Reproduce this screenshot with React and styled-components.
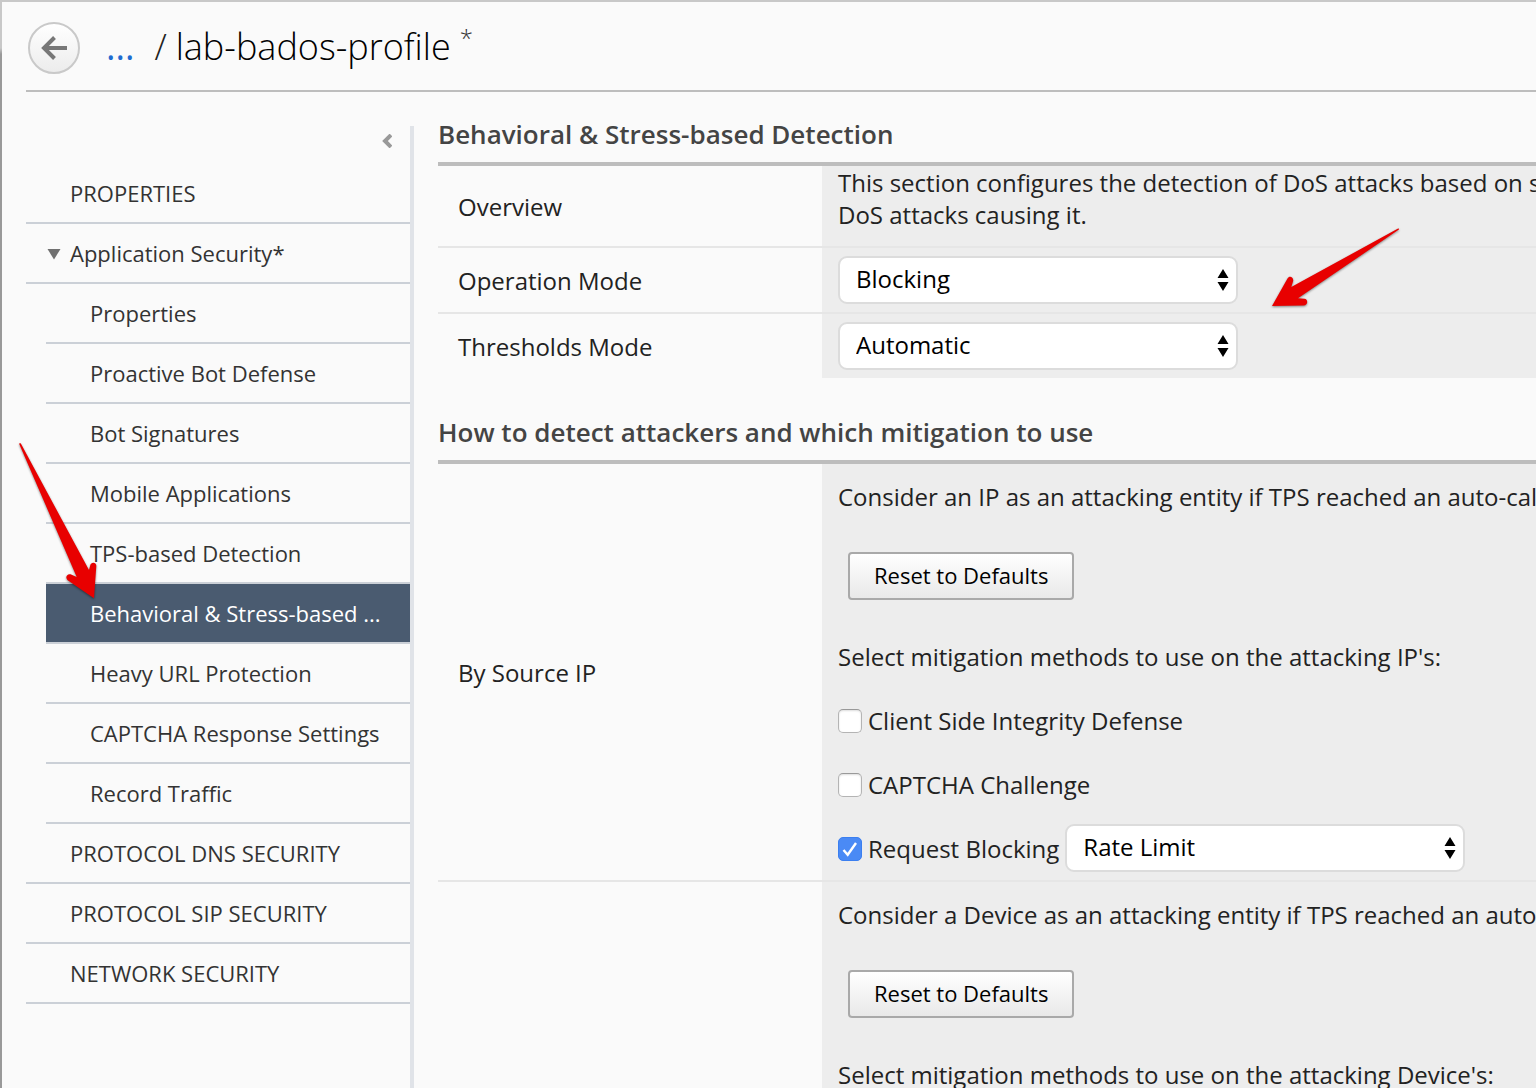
import React from "react";
import styled, { createGlobalStyle } from "styled-components";

const GlobalStyle = createGlobalStyle`
  *, *::before, *::after { box-sizing: border-box; }
  body {
    margin: 0;
    background: #fafafa;
    color: #222;
    font-family: "Open Sans", "Noto Sans", sans-serif;
    font-size: 24px;
    line-height: 32px;
  }
  button, select, input { font: inherit; margin: 0; }
  a { color: inherit; text-decoration: none; }
`;

const Page = styled.div`
  position: relative;
  display: flex;
  flex-direction: column;
  height: 100vh;
  overflow: hidden;
  padding-left: 24px;
  border: 0 solid #999;
  border-width: 2px 0 0 2px;
  border-image: linear-gradient(#c8c8c8 48px, #999 54px) 2;
`;

const Header = styled.header`
  display: flex;
  align-items: flex-start;
  flex: none;
  height: 90px;
  padding-top: 20px;
  border-bottom: 2px solid #bdbdbd;
  font-size: 36px;
  line-height: 50px;
`;

const BackButton = styled.button`
  display: grid;
  place-items: center;
  width: 52px;
  height: 52px;
  margin: 0 26px 0 2px;
  padding: 0;
  border: 2px solid #c9c9c9;
  border-radius: 50%;
  background: linear-gradient(#fff, #ececec);
`;

const Parent = styled.a`
  margin-right: 20px;
  color: #1f6bd0;
`;

const Title = styled.h1`
  display: flex;
  gap: 9px;
  margin: 0;
  color: #000;
  font-size: 36px;
  font-weight: 300;
`;

const Slash = styled.span`
  color: #222;
`;

const Modified = styled.sup`
  color: #333;
  font-size: 24px;
  line-height: 32px;
`;

const Body = styled.div`
  display: flex;
  flex: 1;
  gap: 24px;
  min-height: 0;
  padding-top: 26px;
`;

const Sidebar = styled.nav`
  flex: none;
  width: 388px;
  margin-top: 8px;
  border-right: 4px solid #e0e3e8;
  font-size: 22px;
`;

const CollapseRow = styled.div`
  display: flex;
  justify-content: flex-end;
  align-items: center;
  height: 38px;
  padding: 0 18px 8px 0;
`;

const Collapse = styled.button`
  display: flex;
  padding: 0;
  border: 0;
  background: none;
`;

const NavList = styled.ul`
  margin: 0;
  padding: 0 0 0 ${(p) => (p.$nested ? 20 : 0)}px;
  list-style: none;
`;

const NavLink = styled.a`
  display: flex;
  align-items: center;
  gap: 8px;
  height: 60px;
  padding-left: ${(p) => (p.$arrow ? 20 : 44)}px;
  border-bottom: 2px solid #cbd0d7;
  background: ${(p) => (p.$active ? "#4a5b70" : "transparent")};
  color: ${(p) => (p.$active ? "#fff" : "#333")};
  white-space: nowrap;
`;

const Content = styled.main`
  flex: 1;
  min-width: 0;
  overflow: hidden;
`;

const Section = styled.section`
  margin-bottom: 38px;
`;

const SectionTitle = styled.h2`
  margin: 0;
  padding-bottom: 12px;
  border-bottom: 4px solid #bdbdbd;
  color: #444;
  font-size: 26px;
  font-weight: 600;
`;

const Settings = styled.table`
  width: 100%;
  border-collapse: separate;
  border-spacing: 0;
  table-layout: fixed;
`;

const Row = styled.tr`
  & > * { border-bottom: ${(p) => (p.$last ? 0 : 2)}px solid #e6e6e6; }
`;

const Label = styled.th`
  width: 384px;
  padding: 2px 20px 0;
  font-weight: 400;
  text-align: left;
`;

const Value = styled.td`
  padding: 0 16px;
  background: #ededed;
  white-space: nowrap;
`;

const Overview = styled.p`
  margin: 0;
  padding: 1px 0 15px;
`;

const Line = styled.div`
  display: flex;
  align-items: center;
  gap: 6px;
  height: 64px;
`;

const TextLine = styled.p`
  margin: 0;
  padding: 17px 0 15px;
`;

const ButtonLine = styled.div`
  padding: 24px 10px;
`;

const ResetButton = styled.button`
  display: block;
  height: 48px;
  padding: 0 24px 2px;
  border: 2px solid #a9a9a9;
  border-radius: 4px;
  background: linear-gradient(#fff, #e9e9e9);
  color: #000;
  font-size: 22px;
`;

const CheckLabel = styled.label`
  display: flex;
  align-items: center;
  gap: 6px;
  padding-top: 2px;
`;

const CheckBox = styled.span`
  position: relative;
  display: flex;
  svg {
    position: absolute;
    inset: 0;
    pointer-events: none;
    visibility: hidden;
  }
  input:checked + svg { visibility: visible; }
`;

const CheckInput = styled.input`
  appearance: none;
  width: 24px;
  height: 24px;
  border: 1px solid #b4b4b4;
  border-top-color: #999;
  border-radius: 5px;
  background: #fff;
  box-shadow: inset 0 1px 2px #ddd;
  &:checked {
    border-color: #3b7ff0;
    background: #4a8af5;
    box-shadow: none;
  }
`;

const SelectBox = styled.span`
  position: relative;
  display: block;
  svg {
    position: absolute;
    top: 12px;
    right: 9px;
    pointer-events: none;
  }
`;

const SelectInput = styled.select`
  appearance: none;
  display: block;
  width: 400px;
  height: 48px;
  padding: 0 16px 2px;
  border: 2px solid #dcdcdc;
  border-radius: 9px;
  background: #fff;
  color: #000;
`;

const Pointer = styled.svg`
  position: absolute;
  left: ${(p) => p.$x}px;
  top: ${(p) => p.$y}px;
  pointer-events: none;
  filter: drop-shadow(0 1px 1px rgba(0, 0, 0, 0.45));
`;

const securityPages = [
  "Properties",
  "Proactive Bot Defense",
  "Bot Signatures",
  "Mobile Applications",
  "TPS-based Detection",
  "Behavioral & Stress-based ...",
  "Heavy URL Protection",
  "CAPTCHA Response Settings",
  "Record Traffic",
];

function Select({ label, value }) {
  return (
    <SelectBox>
      <SelectInput aria-label={label} defaultValue={value}>
        <option>{value}</option>
      </SelectInput>
      <svg width="12" height="24" viewBox="0 0 12 24">
        <path d="M6 1l5.500 9H.5zM6 23l5.500-9H.5z" fill="#000" />
      </svg>
    </SelectBox>
  );
}

function Check({ children, checked }) {
  return (
    <CheckLabel>
      <CheckBox>
        <CheckInput type="checkbox" defaultChecked={checked} />
        <svg width="24" height="24" viewBox="0 0 24 24" fill="none" stroke="#fff" strokeWidth="2.4">
          <path d="M5.5 13l4.200 4.800L18 6" />
        </svg>
      </CheckBox>
      {children}
    </CheckLabel>
  );
}

function Mitigation({ entity, target, children }) {
  return (
    <Value>
      <TextLine>Consider {entity} as an attacking entity if TPS reached an auto-calculated threshold</TextLine>
      <ButtonLine>
        <ResetButton type="button">Reset to Defaults</ResetButton>
      </ButtonLine>
      <TextLine>Select mitigation methods to use on the attacking {target}:</TextLine>
      {children}
    </Value>
  );
}

export default function App() {
  return (
    <>
      <GlobalStyle />
      <Page>
        <Header>
          <BackButton type="button" aria-label="Back">
            <svg width="28" height="26" viewBox="0 0 28 26" fill="none" stroke="#777" strokeWidth="4">
              <path d="M14.500 2.500L4 13l10.500 10.500M4 13h23" />
            </svg>
          </BackButton>
          <Parent href="#">...</Parent>
          <Title>
            <Slash>/</Slash>
            <span>lab-bados-profile</span>
            <Modified>*</Modified>
          </Title>
        </Header>
        <Body>
          <Sidebar>
            <CollapseRow>
              <Collapse type="button" aria-label="Collapse menu">
                <svg width="11" height="14" viewBox="0 0 11 14" fill="none" stroke="#999" strokeWidth="4">
                  <path d="M10 1L4 7l6 6" />
                </svg>
              </Collapse>
            </CollapseRow>
            <NavList>
              <li><NavLink href="#">PROPERTIES</NavLink></li>
              <li>
                <NavLink href="#" $arrow>
                  <svg width="16" height="14" viewBox="0 0 16 14">
                    <path d="M1.500 3h13L8 13.500z" fill="#707070" />
                  </svg>
                  Application Security*
                </NavLink>
                <NavList $nested>
                  {securityPages.map((name, i) => (
                    <li key={name}>
                      <NavLink href="#" $active={i === 5}>{name}</NavLink>
                    </li>
                  ))}
                </NavList>
              </li>
              <li><NavLink href="#">PROTOCOL DNS SECURITY</NavLink></li>
              <li><NavLink href="#">PROTOCOL SIP SECURITY</NavLink></li>
              <li><NavLink href="#">NETWORK SECURITY</NavLink></li>
            </NavList>
          </Sidebar>
          <Content>
            <Section>
              <SectionTitle>Behavioral &amp; Stress-based Detection</SectionTitle>
              <Settings>
                <tbody>
                  <Row>
                    <Label scope="row">Overview</Label>
                    <Value>
                      <Overview>
                        This section configures the detection of DoS attacks based on server stress, and the
                        <br />
                        DoS attacks causing it.
                      </Overview>
                    </Value>
                  </Row>
                  <Row>
                    <Label scope="row">Operation Mode</Label>
                    <Value><Line><Select label="Operation Mode" value="Blocking" /></Line></Value>
                  </Row>
                  <Row $last>
                    <Label scope="row">Thresholds Mode</Label>
                    <Value><Line><Select label="Thresholds Mode" value="Automatic" /></Line></Value>
                  </Row>
                </tbody>
              </Settings>
            </Section>
            <Section>
              <SectionTitle>How to detect attackers and which mitigation to use</SectionTitle>
              <Settings>
                <tbody>
                  <Row>
                    <Label scope="row">By Source IP</Label>
                    <Mitigation entity="an IP" target="IP's">
                      <Line><Check>Client Side Integrity Defense</Check></Line>
                      <Line><Check>CAPTCHA Challenge</Check></Line>
                      <Line>
                        <Check checked>Request Blocking</Check>
                        <Select label="Request Blocking method" value="Rate Limit" />
                      </Line>
                    </Mitigation>
                  </Row>
                  <Row $last>
                    <Label scope="row" aria-label="By Device ID" />
                    <Mitigation entity="a Device" target="Device's" />
                  </Row>
                </tbody>
              </Settings>
            </Section>
          </Content>
        </Body>
        <Pointer $x={1268} $y={224} width="132" height="84" viewBox="1270 226 132 84" aria-hidden="true">
          <path
            d="M1398.500 228.300L1291.300 287L1293 281.500C1294.300 277.500 1289.500 274.800 1287.500 278.500L1272 306L1303.500 305.500C1308.500 305 1308 299 1304.500 298.700L1298 298.300L1399 229.500Z"
            fill="#e80000"
          />
        </Pointer>
        <Pointer $x={14} $y={438} width="88" height="164" viewBox="16 440 88 164" aria-hidden="true">
          <path
            d="M19 443.500L20.700 443.200L89 570L90.200 565.500C91 561.500 96.500 562 96.300 566L94 598.300L68 580.500C64.500 577.500 67 573.500 70.500 574.300L76.700 577Z"
            fill="#e80000"
          />
        </Pointer>
      </Page>
    </>
  );
}
